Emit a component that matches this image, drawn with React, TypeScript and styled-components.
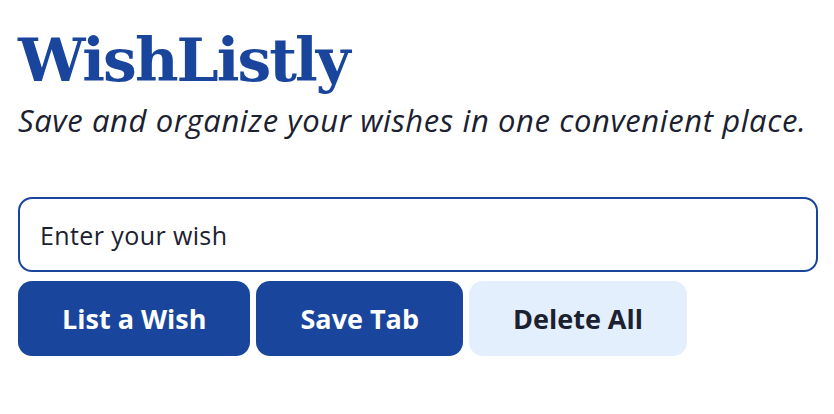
import * as React from "react";
import styled, { createGlobalStyle } from "styled-components";

const GlobalStyle = createGlobalStyle`
  body {
    margin: 0;
    background: #ffffff;
    font-family: "Open Sans", "Noto Sans", sans-serif;
    color: #1b2130;
  }
`;

const Page = styled.main`
  padding: 20px 16px 0 18px;
`;

const Title = styled.h1`
  margin: 0;
  font-family: "DejaVu Serif", "Liberation Serif", serif;
  font-weight: 700;
  font-size: 60px;
  line-height: 80px;
  letter-spacing: -2px;
  color: #1a459d;
`;

const Tagline = styled.p`
  margin: 0;
  font-family: "Open Sans", "Noto Sans", sans-serif;
  font-style: italic;
  font-size: 31px;
  line-height: 40px;
  letter-spacing: 0.6px;
  color: #1b2130;
`;

const Form = styled.div`
  margin-top: 57px;
  display: flex;
  flex-direction: column;
  gap: 9px;
  width: 800px;
`;

const WishInput = styled.input`
  box-sizing: border-box;
  width: 100%;
  height: 75px;
  padding: 0 20px;
  border: 2px solid #1a459d;
  border-radius: 14px;
  font-family: "Open Sans", "Noto Sans", sans-serif;
  font-size: 25px;
  letter-spacing: 0.4px;
  color: #1b2130;
  outline: none;
  &::placeholder {
    color: #1b2130;
  }
`;

const ButtonRow = styled.div`
  display: flex;
  gap: 6px;
`;

const Button = styled.button<{ $light?: boolean }>`
  height: 75px;
  padding: 0 44px;
  border: none;
  border-radius: 14px;
  font-family: "Open Sans", "Noto Sans", sans-serif;
  font-weight: 700;
  font-size: 27px;
  background: ${(p) => (p.$light ? "#e3effc" : "#1a459d")};
  color: ${(p) => (p.$light ? "#1b2130" : "#ffffff")};
  cursor: pointer;
`;

export default function App() {
  return (
    <>
      <GlobalStyle />
      <Page>
        <Title>WishListly</Title>
        <Tagline>Save and organize your wishes in one convenient place.</Tagline>
        <Form>
          <WishInput placeholder="Enter your wish" />
          <ButtonRow>
            <Button>List a Wish</Button>
            <Button>Save Tab</Button>
            <Button $light>Delete All</Button>
          </ButtonRow>
        </Form>
      </Page>
    </>
  );
}
